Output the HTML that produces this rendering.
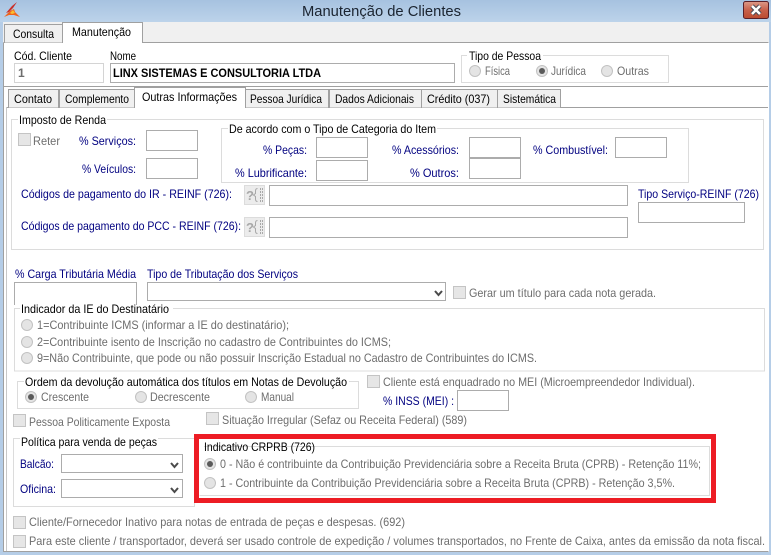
<!DOCTYPE html>
<html><head><meta charset="utf-8"><style>
html,body{margin:0;padding:0;width:771px;height:555px;overflow:hidden;background:#fff}
svg{display:block}
text{font-family:"Liberation Sans",sans-serif;font-size:12px;fill:#000;white-space:pre}
.n{fill:#000080}.g{fill:#6d6d6d}.b{font-weight:bold}
.i{fill:#fff;stroke:#acacac}.gb{fill:none;stroke:#dcdcdc}
.c{fill:#e6e6e6;stroke:#c4c4c4}.r{fill:#e4e4e4;stroke:#c2c2c2}
.tab{fill:#f0f0f0;stroke:#a0a0a0}.act{fill:#fff;stroke:#a0a0a0}
.bg{fill:#fff}
</style></head><body>
<svg width="771" height="555" viewBox="0 0 771 555" xmlns="http://www.w3.org/2000/svg">
<defs>
<linearGradient id="tb" x1="0" y1="0" x2="0" y2="1"><stop offset="0" stop-color="#a6c2e0"/><stop offset="1" stop-color="#bcd3ea"/></linearGradient>
<linearGradient id="cl" x1="0" y1="0" x2="0" y2="1"><stop offset="0" stop-color="#dc9a88"/><stop offset=".5" stop-color="#c8604a"/><stop offset="1" stop-color="#bb4a30"/></linearGradient>
</defs>
<rect width="771" height="555" fill="#b5cde7"/>
<rect width="771" height="22" fill="url(#tb)"/>
<rect x="3" y="22" width="766" height="20" fill="#f0f0f0"/>
<rect x="3" y="42" width="766" height="510" fill="#fff"/>
<path d="M3.5 42.5V551.5H768.5M3.5 42.5H768.5" fill="none" stroke="#a0a0a0"/>
<path d="M6.5 107V551" stroke="#c8c8c8" fill="none"/>
<!-- logo -->
<polygon points="17,2 12,6 6,13 9,12 13,8" fill="#c9302a"/>
<polygon points="4,17 10,11 14,9 15,12 20,17 14,15 9,15" fill="#f0641e"/>
<polygon points="10,13 13,10 15,13 12,14" fill="#f8c030"/>
<text x="302" y="16" textLength="159" lengthAdjust="spacingAndGlyphs" style="font-size:15px;fill:#1b2430">Manutenção de Clientes</text>
<!-- close -->
<rect x="743.5" y="1.5" width="25" height="17" rx="2" fill="url(#cl)" stroke="#5a2028"/>
<path d="M752 6L760 14M760 6L752 14" stroke="#4a4a55" stroke-width="4.5" fill="none"/>
<path d="M752 6L760 14M760 6L752 14" stroke="#fff" stroke-width="2.5" fill="none"/>
<!-- top tabs -->
<path class="tab" d="M4.5 42.5V24.5H62.5V42.5"/>
<path class="act" d="M62.5 42.5V22.5H142.5V42.5"/>
<path d="M63 42.5H142" stroke="#fff"/>
<text x="13" y="38" textLength="41" lengthAdjust="spacingAndGlyphs">Consulta</text>
<text x="72" y="36" textLength="59" lengthAdjust="spacingAndGlyphs">Manutenção</text>
<!-- header -->
<text x="14" y="60" textLength="58" lengthAdjust="spacingAndGlyphs">Cód. Cliente</text>
<text x="110" y="60" textLength="26" lengthAdjust="spacingAndGlyphs">Nome</text>
<rect x="14.5" y="63.5" width="89" height="19" fill="#fff" stroke="#d4d4d4"/>
<rect class="i" x="110.5" y="63.5" width="344" height="19"/>
<text x="18" y="77" class="b" style="fill:#6d6d6d">1</text>
<text x="113" y="77" class="b" textLength="208" lengthAdjust="spacingAndGlyphs">LINX SISTEMAS E CONSULTORIA LTDA</text>
<rect class="gb" x="461.5" y="55.5" width="207" height="27"/>
<rect class="bg" x="467" y="52" width="76" height="8"/>
<text x="469" y="60" textLength="72" lengthAdjust="spacingAndGlyphs">Tipo de Pessoa</text>
<circle class="r" cx="475" cy="71" r="5.5"/><text x="485" y="75" class="g" textLength="25" lengthAdjust="spacingAndGlyphs">Física</text>
<circle class="r" cx="542" cy="71" r="5.5"/><circle cx="542" cy="71" r="3" fill="#5a5a5a"/><text x="551" y="75" class="g" textLength="35" lengthAdjust="spacingAndGlyphs">Jurídica</text>
<circle class="r" cx="607" cy="71" r="5.5"/><text x="617" y="75" class="g" textLength="32" lengthAdjust="spacingAndGlyphs">Outras</text>
<!-- inner tabs -->
<path d="M3 86.5H768" stroke="#a0a0a0"/>
<rect x="6" y="87" width="762" height="20" fill="#fff"/>
<path d="M7 107.5H768" stroke="#a0a0a0"/>
<path class="tab" d="M8.5 107.5V89.5H58.5V107.5"/>
<path class="tab" d="M59.5 107.5V89.5H134.5V107.5"/>
<path class="tab" d="M245.5 107.5V89.5H328.5V107.5"/>
<path class="tab" d="M329.5 107.5V89.5H421.5V107.5"/>
<path class="tab" d="M421.5 107.5V89.5H497.5V107.5"/>
<path class="tab" d="M497.5 107.5V89.5H560.5V107.5"/>
<path class="act" d="M134.5 107.5V87.5H245.5V107.5"/>
<path d="M135 107.5H245" stroke="#fff"/>
<text x="14" y="103" textLength="38" lengthAdjust="spacingAndGlyphs">Contato</text>
<text x="65" y="103" textLength="64" lengthAdjust="spacingAndGlyphs">Complemento</text>
<text x="142" y="101" textLength="95" lengthAdjust="spacingAndGlyphs">Outras Informações</text>
<text x="250" y="103" textLength="72" lengthAdjust="spacingAndGlyphs">Pessoa Jurídica</text>
<text x="335" y="103" textLength="79" lengthAdjust="spacingAndGlyphs">Dados Adicionais</text>
<text x="427" y="103" textLength="63" lengthAdjust="spacingAndGlyphs">Crédito (037)</text>
<text x="503" y="103" textLength="53" lengthAdjust="spacingAndGlyphs">Sistemática</text>
<!-- imposto -->
<rect class="gb" x="11.5" y="119.5" width="752" height="130"/>
<rect class="bg" x="18" y="116" width="89" height="8"/>
<text x="19" y="124" textLength="87" lengthAdjust="spacingAndGlyphs">Imposto de Renda</text>
<rect class="c" x="18.5" y="133.5" width="12" height="12"/>
<text x="33" y="145" class="g" textLength="27" lengthAdjust="spacingAndGlyphs">Reter</text>
<text x="79" y="145" class="n" textLength="57" lengthAdjust="spacingAndGlyphs">% Serviços:</text>
<rect class="i" x="146.5" y="130.5" width="51" height="20"/>
<text x="82" y="173" class="n" textLength="54" lengthAdjust="spacingAndGlyphs">% Veículos:</text>
<rect class="i" x="146.5" y="158.5" width="51" height="20"/>
<rect class="gb" x="221.5" y="128.5" width="467" height="54"/>
<rect class="bg" x="228" y="125" width="209" height="8"/>
<text x="229" y="133" textLength="207" lengthAdjust="spacingAndGlyphs">De acordo com o Tipo de Categoria do Item</text>
<text x="263" y="154" class="n" textLength="44" lengthAdjust="spacingAndGlyphs">% Peças:</text>
<rect class="i" x="316.5" y="137.5" width="51" height="20"/>
<text x="235" y="177" class="n" textLength="72" lengthAdjust="spacingAndGlyphs">% Lubrificante:</text>
<rect class="i" x="316.5" y="160.5" width="51" height="20"/>
<text x="392" y="154" class="n" textLength="67" lengthAdjust="spacingAndGlyphs">% Acessórios:</text>
<rect class="i" x="469.5" y="137.5" width="51" height="20"/>
<text x="410" y="177" class="n" textLength="49" lengthAdjust="spacingAndGlyphs">% Outros:</text>
<rect class="i" x="469.5" y="158.5" width="51" height="20"/>
<text x="533" y="154" class="n" textLength="75" lengthAdjust="spacingAndGlyphs">% Combustível:</text>
<rect class="i" x="615.5" y="137.5" width="51" height="20"/>
<text x="21" y="198" class="n" textLength="211" lengthAdjust="spacingAndGlyphs">Códigos de pagamento do IR - REINF (726):</text>
<rect x="244.5" y="185.5" width="20" height="19" fill="#ececec" stroke="#dcdcdc"/>
<text x="246" y="200" class="b" style="fill:#a8a8a8;font-size:13px">?</text>
<path d="M257.5 188.5Q255.5 188.5 255.5 191V193.5L253.5 195L255.5 196.5V199Q255.5 201.5 257.5 201.5" fill="none" stroke="#a8a8a8"/>
<path d="M260.5 188V202M262.5 188V202" fill="none" stroke="#a8a8a8" stroke-dasharray="2 1"/>
<rect class="i" x="269.5" y="185.5" width="358" height="20"/>
<text x="21" y="230" class="n" textLength="220" lengthAdjust="spacingAndGlyphs">Códigos de pagamento do PCC - REINF (726):</text>
<rect x="244.5" y="217.5" width="20" height="19" fill="#ececec" stroke="#dcdcdc"/>
<text x="246" y="232" class="b" style="fill:#a8a8a8;font-size:13px">?</text>
<path d="M257.5 220.5Q255.5 220.5 255.5 223V225.5L253.5 227L255.5 228.5V231Q255.5 233.5 257.5 233.5" fill="none" stroke="#a8a8a8"/>
<path d="M260.5 220V234M262.5 220V234" fill="none" stroke="#a8a8a8" stroke-dasharray="2 1"/>
<rect class="i" x="269.5" y="217.5" width="358" height="20"/>
<text x="638" y="198" class="n" textLength="121" lengthAdjust="spacingAndGlyphs">Tipo Serviço-REINF (726)</text>
<rect class="i" x="638.5" y="202.5" width="106" height="20"/>
<!-- carga -->
<text x="15" y="278" class="n" textLength="121" lengthAdjust="spacingAndGlyphs">% Carga Tributária Média</text>
<path d="M14.5 305V282.5H136.5V305" fill="none" stroke="#acacac"/>
<text x="147" y="278" class="n" textLength="151" lengthAdjust="spacingAndGlyphs">Tipo de Tributação dos Serviços</text>
<rect class="i" x="147.5" y="282.5" width="298" height="18"/>
<path d="M435 291L438.5 295L442 291" fill="none" stroke="#4a4a4a" stroke-width="2"/>
<rect class="c" x="453.5" y="286.5" width="12" height="12"/>
<text x="469" y="297" class="g" textLength="187" lengthAdjust="spacingAndGlyphs">Gerar um título para cada nota gerada.</text>
<!-- IE -->
<rect x="14.5" y="308.5" width="750" height="62.5" fill="#fff" stroke="#dcdcdc"/>
<rect class="bg" x="20" y="305" width="153" height="8"/>
<text x="21" y="313" textLength="148" lengthAdjust="spacingAndGlyphs">Indicador da IE do Destinatário</text>
<circle class="r" cx="27" cy="325" r="5.5"/>
<text x="37" y="329" class="g" textLength="252" lengthAdjust="spacingAndGlyphs">1=Contribuinte ICMS (informar a IE do destinatário);</text>
<circle class="r" cx="27" cy="342" r="5.5"/>
<text x="37" y="346" class="g" textLength="354" lengthAdjust="spacingAndGlyphs">2=Contribuinte isento de Inscrição no cadastro de Contribuintes do ICMS;</text>
<circle class="r" cx="27" cy="358" r="5.5"/>
<text x="37" y="362" class="g" textLength="500" lengthAdjust="spacingAndGlyphs">9=Não Contribuinte, que pode ou não possuir Inscrição Estadual no Cadastro de Contribuintes do ICMS.</text>
<!-- ordem -->
<rect class="gb" x="17.5" y="381.5" width="341" height="27"/>
<rect class="bg" x="24" y="378" width="325" height="8"/>
<text x="25" y="386" textLength="322" lengthAdjust="spacingAndGlyphs">Ordem da devolução automática dos títulos em Notas de Devolução</text>
<circle class="r" cx="31" cy="397" r="5.5"/><circle cx="31" cy="397" r="3" fill="#5a5a5a"/>
<text x="41" y="401" class="g" textLength="48" lengthAdjust="spacingAndGlyphs">Crescente</text>
<circle class="r" cx="141" cy="397" r="5.5"/>
<text x="150" y="401" class="g" textLength="60" lengthAdjust="spacingAndGlyphs">Decrescente</text>
<circle class="r" cx="251" cy="397" r="5.5"/>
<text x="261" y="401" class="g" textLength="33" lengthAdjust="spacingAndGlyphs">Manual</text>
<rect class="c" x="367.5" y="375.5" width="12" height="12"/>
<text x="383" y="386" class="g" textLength="312" lengthAdjust="spacingAndGlyphs">Cliente está enquadrado no MEI (Microempreendedor Individual).</text>
<text x="383" y="405" class="n" textLength="71" lengthAdjust="spacingAndGlyphs">% INSS (MEI) :</text>
<rect class="i" x="457.5" y="390.5" width="51" height="20"/>
<rect class="c" x="13.5" y="414.5" width="12" height="12"/>
<text x="29" y="426" class="g" textLength="141" lengthAdjust="spacingAndGlyphs">Pessoa Politicamente Exposta</text>
<rect class="c" x="206.5" y="412.5" width="12" height="12"/>
<text x="222" y="424" class="g" textLength="245" lengthAdjust="spacingAndGlyphs">Situação Irregular (Sefaz ou Receita Federal) (589)</text>
<!-- politica -->
<rect class="gb" x="13.5" y="438.5" width="181" height="68"/>
<rect class="bg" x="20" y="435" width="138" height="8"/>
<text x="21" y="446" textLength="136" lengthAdjust="spacingAndGlyphs">Política para venda de peças</text>
<text x="20" y="468" class="n" textLength="34" lengthAdjust="spacingAndGlyphs">Balcão:</text>
<rect class="i" x="61.5" y="454.5" width="121" height="18"/>
<path d="M171 463L174.5 467L178 463" fill="none" stroke="#4a4a4a" stroke-width="2"/>
<text x="20" y="493" class="n" textLength="36" lengthAdjust="spacingAndGlyphs">Oficina:</text>
<rect class="i" x="61.5" y="479.5" width="121" height="18"/>
<path d="M171 488L174.5 492L178 488" fill="none" stroke="#4a4a4a" stroke-width="2"/>
<!-- crprb -->
<rect x="196.5" y="436.5" width="517" height="64" fill="#fff" stroke="#ed1c24" stroke-width="5"/>
<path d="M199.5 495.5H709.5V446.5H204" fill="none" stroke="#dcdcdc"/>
<text x="204" y="451" textLength="111" lengthAdjust="spacingAndGlyphs">Indicativo CRPRB (726)</text>
<circle class="r" cx="210" cy="464" r="5.5"/><circle cx="210" cy="464" r="3" fill="#5a5a5a"/>
<text x="220" y="468" class="g" textLength="481" lengthAdjust="spacingAndGlyphs">0 - Não é contribuinte da Contribuição Previdenciária sobre a Receita Bruta (CPRB) - Retenção 11%;</text>
<circle class="r" cx="210" cy="483" r="5.5"/>
<text x="220" y="487" class="g" textLength="455" lengthAdjust="spacingAndGlyphs">1 - Contribuinte da Contribuição Previdenciária sobre a Receita Bruta (CPRB) - Retenção 3,5%.</text>
<!-- bottom -->
<rect class="c" x="13.5" y="516.5" width="12" height="12"/>
<text x="29" y="526" class="g" textLength="376" lengthAdjust="spacingAndGlyphs">Cliente/Fornecedor Inativo para notas de entrada de peças e despesas. (692)</text>
<rect class="c" x="13.5" y="535.5" width="12" height="12"/>
<text x="29" y="545" class="g" textLength="736" lengthAdjust="spacingAndGlyphs">Para este cliente / transportador, deverá ser usado controle de expedição / volumes transportados, no Frente de Caixa, antes da emissão da nota fiscal.</text>
</svg>
</body></html>
